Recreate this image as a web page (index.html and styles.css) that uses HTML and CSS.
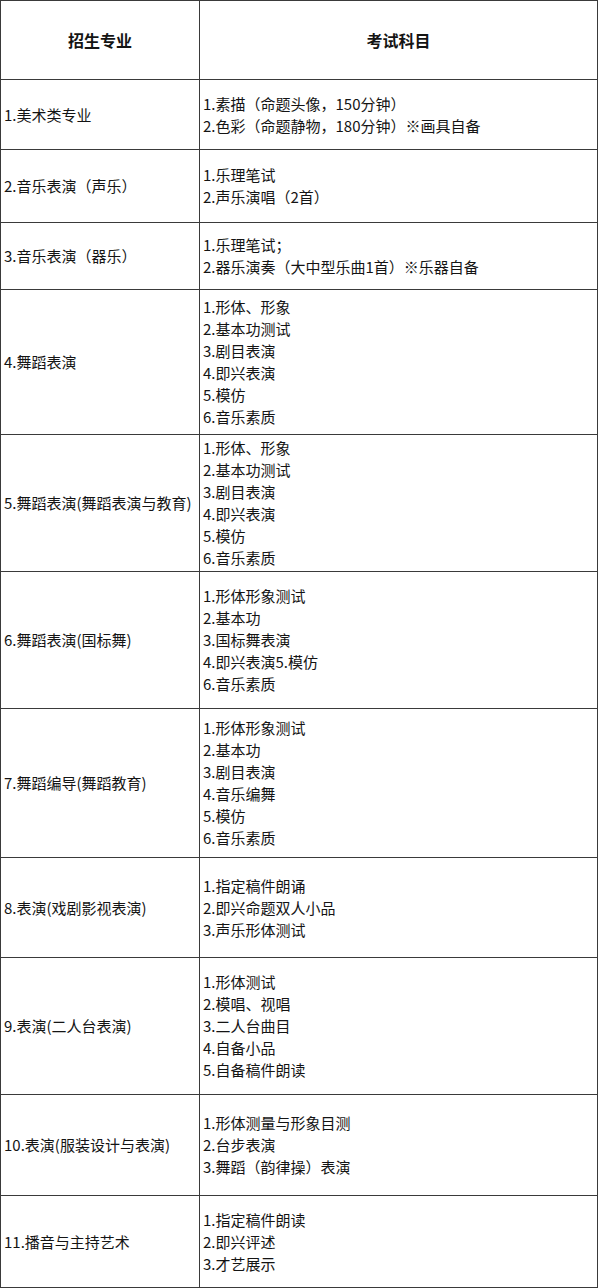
FILE: index.html
```html
<!DOCTYPE html>
<html lang="zh-CN">
<head>
<meta charset="utf-8">
<title>招生专业</title>
<link rel="stylesheet" href="styles.css">
</head>
<body>
<table class="exam">
  <colgroup><col class="c1"><col class="c2"></colgroup>
  <tr class="r0"><th>招生专业</th><th>考试科目</th></tr>
  <tr class="r1"><td>1.美术类专业</td><td>1.素描（命题头像，150分钟）<br>2.色彩（命题静物，180分钟）※画具自备</td></tr>
  <tr class="r2"><td>2.音乐表演（声乐）</td><td>1.乐理笔试<br>2.声乐演唱（2首）</td></tr>
  <tr class="r3"><td>3.音乐表演（器乐）</td><td>1.乐理笔试；<br>2.器乐演奏（大中型乐曲1首）※乐器自备</td></tr>
  <tr class="r4"><td>4.舞蹈表演</td><td>1.形体、形象<br>2.基本功测试<br>3.剧目表演<br>4.即兴表演<br>5.模仿<br>6.音乐素质</td></tr>
  <tr class="r5"><td>5.舞蹈表演(舞蹈表演与教育)</td><td>1.形体、形象<br>2.基本功测试<br>3.剧目表演<br>4.即兴表演<br>5.模仿<br>6.音乐素质</td></tr>
  <tr class="r6"><td>6.舞蹈表演(国标舞)</td><td>1.形体形象测试<br>2.基本功<br>3.国标舞表演<br>4.即兴表演5.模仿<br>6.音乐素质</td></tr>
  <tr class="r7"><td>7.舞蹈编导(舞蹈教育)</td><td>1.形体形象测试<br>2.基本功<br>3.剧目表演<br>4.音乐编舞<br>5.模仿<br>6.音乐素质</td></tr>
  <tr class="r8"><td>8.表演(戏剧影视表演)</td><td>1.指定稿件朗诵<br>2.即兴命题双人小品<br>3.声乐形体测试</td></tr>
  <tr class="r9"><td>9.表演(二人台表演)</td><td>1.形体测试<br>2.模唱、视唱<br>3.二人台曲目<br>4.自备小品<br>5.自备稿件朗读</td></tr>
  <tr class="r10"><td>10.表演(服装设计与表演)</td><td>1.形体测量与形象目测<br>2.台步表演<br>3.舞蹈（韵律操）表演</td></tr>
  <tr class="r11"><td>11.播音与主持艺术</td><td>1.指定稿件朗读<br>2.即兴评述<br>3.才艺展示</td></tr>
</table>
</body>
</html>
```
FILE: styles.css
```css
html, body {
  margin: 0;
  padding: 0;
  background: #ffffff;
}
body {
  font-family: "Noto Sans CJK SC", "Microsoft YaHei", sans-serif;
  font-size: 15px;
  line-height: 22px;
  color: #141414;
}
.exam {
  border-collapse: collapse;
  table-layout: fixed;
  width: 598px;
}
.c1 { width: 199px; }
.exam th, .exam td {
  border: 1px solid #3a3a3a;
  padding: 0 3px;
  vertical-align: middle;
  text-align: left;
  white-space: nowrap;
}
.exam th {
  text-align: center;
  font-weight: bold;
  font-size: 16px;
}
.r0 { height: 79px; }
.r1 { height: 70px; }
.r2 { height: 73px; }
.r3 { height: 67px; }
.r4 { height: 145px; }
.r5 { height: 137px; }
.r6 { height: 137px; }
.r7 { height: 149px; }
.r8 { height: 100px; }
.r9 { height: 137px; }
.r10 { height: 101px; }
.r11 { height: 92px; }
```
